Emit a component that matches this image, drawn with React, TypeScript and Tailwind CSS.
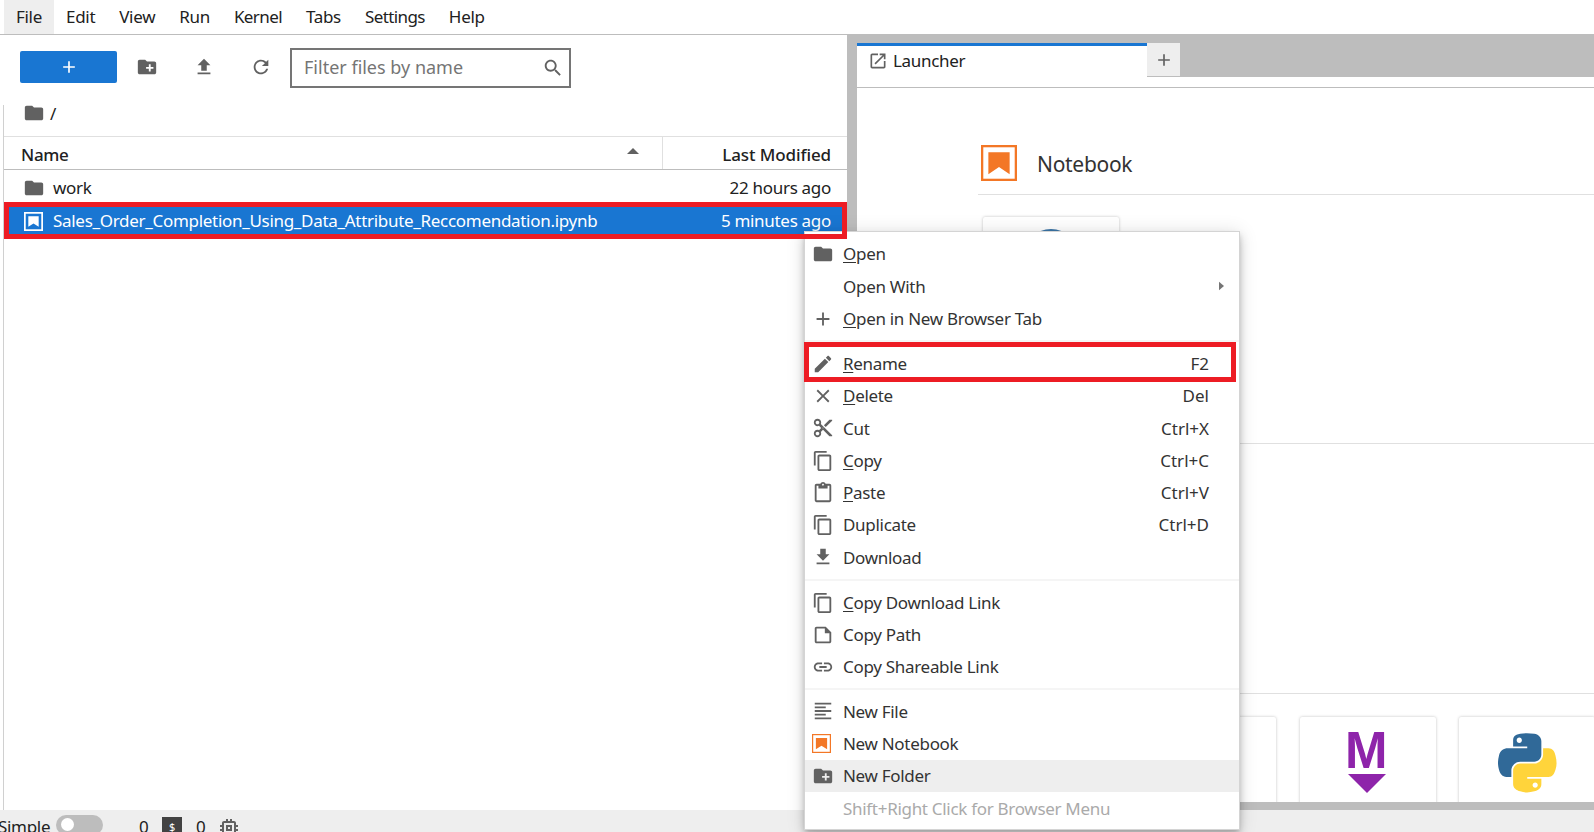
import React from 'react';

const ICONS: Record<string, string> = {
  folder: 'M10 4H4c-1.1 0-1.99.9-1.99 2L2 18c0 1.1.9 2 2 2h16c1.1 0 2-.9 2-2V8c0-1.1-.9-2-2-2h-8l-2-2z',
  newFolder: 'M20 6h-8l-2-2H4c-1.11 0-1.99.89-1.99 2L2 18c0 1.11.89 2 2 2h16c1.11 0 2-.89 2-2V8c0-1.11-.89-2-2-2zm-1 8h-3v3h-2v-3h-3v-2h3V9h2v3h3v2z',
  upload: 'M9 16h6v-6h4l-7-7-7 7h4zm-4 2h14v2H5z',
  refresh: 'M17.65 6.35C16.2 4.9 14.21 4 12 4c-4.42 0-7.99 3.58-7.99 8s3.57 8 7.99 8c3.73 0 6.84-2.55 7.73-6h-2.08c-.82 2.33-3.04 4-5.65 4-3.31 0-6-2.69-6-6s2.69-6 6-6c1.66 0 3.14.69 4.22 1.78L13 11h7V4l-2.35 2.35z',
  search: 'M15.5 14h-.79l-.28-.27C15.41 12.59 16 11.11 16 9.5 16 5.91 13.09 3 9.5 3S3 5.91 3 9.5 5.91 16 9.5 16c1.61 0 3.09-.59 4.23-1.57l.27.28v.79l5 4.99L20.49 19l-4.99-5zm-6 0C7.01 14 5 11.99 5 9.5S7.01 5 9.5 5 14 7.01 14 9.5 11.99 14 9.5 14z',
  launch: 'M19 19H5V5h7V3H5c-1.11 0-2 .9-2 2v14c0 1.1.89 2 2 2h14c1.1 0 2-.9 2-2v-7h-2v7zM14 3v2h3.59l-9.83 9.83 1.41 1.41L19 6.41V10h2V3h-7z',
  add: 'M19 13h-6v6h-2v-6H5v-2h6V5h2v6h6v2z',
  edit: 'M3 17.25V21h3.75L17.81 9.94l-3.75-3.75L3 17.25zM20.71 7.04c.39-.39.39-1.02 0-1.41l-2.34-2.34c-.39-.39-1.02-.39-1.41 0l-1.83 1.83 3.75 3.75 1.83-1.83z',
  close: 'M19 6.41L17.59 5 12 10.59 6.41 5 5 6.41 10.59 12 5 17.59 6.41 19 12 13.41 17.59 19 19 17.59 13.41 12z',
  cut: 'M9.64 7.64c.23-.5.36-1.05.36-1.64 0-2.21-1.79-4-4-4S2 3.79 2 6s1.79 4 4 4c.59 0 1.14-.13 1.64-.36L10 12l-2.36 2.36C7.14 14.13 6.59 14 6 14c-2.21 0-4 1.79-4 4s1.79 4 4 4 4-1.79 4-4c0-.59-.13-1.14-.36-1.64L12 14l7 7h3v-1L9.64 7.64zM6 8c-1.1 0-2-.89-2-2s.9-2 2-2 2 .89 2 2-.9 2-2 2zm0 12c-1.1 0-2-.89-2-2s.9-2 2-2 2 .89 2 2-.9 2-2 2zm6-7.5c-.28 0-.5-.22-.5-.5s.22-.5.5-.5.5.22.5.5-.22.5-.5.5zM19 3l-6 6 2 2 7-7V3z',
  copy: 'M16 1H4c-1.1 0-2 .9-2 2v14h2V3h12V1zm3 4H8c-1.1 0-2 .9-2 2v14c0 1.1.9 2 2 2h11c1.1 0 2-.9 2-2V7c0-1.1-.9-2-2-2zm0 16H8V7h11v14z',
  paste: 'M19 2h-4.18C14.4.84 13.3 0 12 0c-1.3 0-2.4.84-2.82 2H5c-1.1 0-2 .9-2 2v16c0 1.1.9 2 2 2h14c1.1 0 2-.9 2-2V4c0-1.1-.9-2-2-2zm-7 0c.55 0 1 .45 1 1s-.45 1-1 1-1-.45-1-1 .45-1 1-1zm7 18H5V4h2v3h10V4h2v16z',
  download: 'M19 9h-4V3H9v6H5l7 7 7-7zM5 18v2h14v-2H5z',
  path: 'M15 3H5c-1.1 0-2 .9-2 2v14c0 1.1.9 2 2 2h14c1.1 0 2-.9 2-2V9l-6-6zm4 16H5V5h9v5h5v9z',
  link: 'M3.9 12c0-1.71 1.39-3.1 3.1-3.1h4V7H7c-2.76 0-5 2.24-5 5s2.24 5 5 5h4v-1.9H7c-1.71 0-3.1-1.39-3.1-3.1zM8 13h8v-2H8v2zm9-6h-4v1.9h4c1.71 0 3.1 1.39 3.1 3.1s-1.39 3.1-3.1 3.1h-4V17h4c2.76 0 5-2.24 5-5s-2.24-5-5-5z',
  lines: 'M15 15H3v2h12v-2zm0-8H3v2h12V7zM3 13h18v-2H3v2zm0 8h18v-2H3v2zM3 3v2h18V3H3z',
  chip: 'M15 9H9v6h6V9zm-2 4h-2v-2h2v2zm8-2V9h-2V7c0-1.1-.9-2-2-2h-2V3h-2v2h-2V3H9v2H7c-1.1 0-2 .9-2 2v2H3v2h2v2H3v2h2v2c0 1.1.9 2 2 2h2v2h2v-2h2v2h2v-2h2c1.1 0 2-.9 2-2v-2h2v-2h-2v-2h2zm-4 6H7V7h10v10z',
};

const Icon = ({ name, className = 'w-[22px] h-[22px] text-[#616161]' }: { name: string; className?: string }) => (
  <svg viewBox="0 0 24 24" className={`shrink-0 fill-current ${className}`}>
    <path d={ICONS[name]} />
  </svg>
);

const NotebookIcon = ({ className }: { className: string }) => (
  <svg viewBox="0 0 22 22" className={`shrink-0 ${className}`}>
    <rect x="0.7" y="0.7" width="20.6" height="20.6" fill="#fff" stroke="#f37726" strokeWidth="1.4" />
    <path d="M4.5 4.500h13v13.300L11 13.500l-6.500 4.300z" fill="#f37726" />
  </svg>
);

const PythonLogo = () => (
  <svg viewBox="0 0 112 113" className="w-[59px] h-[60px]">
    <path fill="#306998" d="M54.9 0C50.3 0 46 .4 42.1 1.100 30.800 3.100 28.700 7.300 28.700 15v10.300h26.800v3.400H18.600C10.800 28.700 4 33.300 1.900 42.300c-2.500 10.200-2.600 16.500 0 27.200C3.800 77.400 8.300 83 16.100 83h9.300V70.700c0-8.800 7.600-16.600 16.700-16.600h26.800c7.500 0 13.400-6.100 13.400-13.600V15c0-7.300-6.100-12.700-13.400-13.900C64.300.3 59.500 0 54.900 0zM40.400 8.200c2.800 0 5 2.300 5 5.100 0 2.800-2.300 5.100-5 5.100-2.800 0-5-2.300-5-5.100 0-2.800 2.300-5.100 5-5.100z" />
    <path fill="#ffd43b" d="M85.600 28.700v11.900c0 9.200-7.800 17-16.700 17H42.100c-7.300 0-13.400 6.300-13.400 13.600v25.500c0 7.300 6.300 11.500 13.400 13.600 8.500 2.500 16.600 2.900 26.800 0 6.800-2 13.400-5.900 13.400-13.600V86.500H55.500v-3.400h40.200c7.800 0 10.700-5.400 13.400-13.600 2.800-8.400 2.700-16.500 0-27.200-1.900-7.800-5.600-13.600-13.400-13.600H85.600zM70.600 93.300c2.800 0 5 2.300 5 5.100 0 2.800-2.300 5.100-5 5.100-2.800 0-5-2.300-5-5.100 0-2.800 2.300-5.100 5-5.100z" />
  </svg>
);

type MenuRow = { icon?: string; u?: string; text: string; key?: string; arrow?: boolean; hover?: boolean; disabled?: boolean; red?: boolean };

const menuGroups: MenuRow[][] = [
  [
    { icon: 'folder', u: 'O', text: 'pen' },
    { text: 'Open With', arrow: true },
    { icon: 'add', u: 'O', text: 'pen in New Browser Tab' },
  ],
  [
    { icon: 'edit', u: 'R', text: 'ename', key: 'F2', red: true },
    { icon: 'close', u: 'D', text: 'elete', key: 'Del' },
    { icon: 'cut', text: 'Cut', key: 'Ctrl+X' },
    { icon: 'copy', u: 'C', text: 'opy', key: 'Ctrl+C' },
    { icon: 'paste', u: 'P', text: 'aste', key: 'Ctrl+V' },
    { icon: 'copy', text: 'Duplicate', key: 'Ctrl+D' },
    { icon: 'download', text: 'Download' },
  ],
  [
    { icon: 'copy', u: 'C', text: 'opy Download Link' },
    { icon: 'path', text: 'Copy Path' },
    { icon: 'link', text: 'Copy Shareable Link' },
  ],
  [
    { icon: 'lines', text: 'New File' },
    { icon: 'notebook', text: 'New Notebook' },
    { icon: 'newFolder', text: 'New Folder', hover: true },
    { text: 'Shift+Right Click for Browser Menu', disabled: true },
  ],
];

const ContextMenu = () => (
  <div className="absolute left-[804px] top-[231px] z-10 w-[436px] bg-white border border-[#d4d4d4] pt-[6px] pb-[4px] shadow-[0_3px_5px_-1px_rgba(0,0,0,0.2),0_6px_10px_0_rgba(0,0,0,0.14),0_1px_18px_0_rgba(0,0,0,0.12)]">
    {menuGroups.map((group, g) => (
      <div key={g}>
        {g > 0 && (
          <div className={`flex items-center ${g === 3 ? 'h-[12px]' : 'h-[13px]'}`}>
            <div className="w-full h-[2px] bg-[#f5f5f5]" />
          </div>
        )}
        {group.map((row) => (
          <div
            key={row.text}
            className={`relative h-[32.25px] flex items-center pl-[7px] pr-[30px] ${row.hover ? 'bg-[#eeeeee]' : ''} ${row.disabled ? 'text-[#aaaaaa] mt-px' : 'text-[#333333]'}`}
          >
            <div className="w-[31px] shrink-0">
              {row.icon === 'notebook' ? (
                <NotebookIcon className="w-[19px] h-[19px]" />
              ) : row.icon ? (
                <Icon name={row.icon} />
              ) : null}
            </div>
            <span className="flex-1 whitespace-nowrap">
              {row.u && <u className="underline-offset-2">{row.u}</u>}
              {row.text}
            </span>
            {row.key && <span className="whitespace-nowrap tracking-normal">{row.key}</span>}
            {row.arrow && (
              <svg viewBox="0 0 6 10" className="absolute right-[15px] w-[5px] h-[10px] fill-[#757575]"><path d="M0 0l6 5-6 5z" /></svg>
            )}
            {row.red && <div className="absolute -left-[1px] -top-[6px] w-[432px] h-[40px] border-[5px] border-[#ed1c24]" />}
          </div>
        ))}
      </div>
    ))}
  </div>
);

const menuItems = [
  { label: 'File', cls: 'bg-[#eeeeee]' },
  { label: 'Edit', cls: '' },
  { label: 'View', cls: '' },
  { label: 'Run', cls: '' },
  { label: 'Kernel', cls: 'tracking-[-0.6px]' },
  { label: 'Tabs', cls: '' },
  { label: 'Settings', cls: 'tracking-[-0.6px]' },
  { label: 'Help', cls: '' },
];

const Card = ({ children }: { children?: React.ReactNode }) => (
  <div className="w-[136px] h-[136px] shrink-0 bg-white rounded-[2px] shadow-[0_0_3px_rgba(0,0,0,0.25)] flex justify-center pt-[16px]">
    {children}
  </div>
);

const SectionTitle = ({ icon, label }: { icon: React.ReactNode; label: string }) => (
  <div className="h-[50px] flex items-start gap-[20px] border-b border-[#e0e0e0] pl-[3px]">
    {icon}
    <span className="text-[21px] leading-[38px] text-[#333333]">{label}</span>
  </div>
);

export default function App() {
  return (
    <div className="relative h-[832px] w-[1594px] overflow-hidden bg-white text-[17px] tracking-[-0.3px] text-[#212121] font-['Noto_Sans','Open_Sans',sans-serif]">
      {/* top menu bar */}
      <div className="h-[35px] flex border-b border-[#bdbdbd] pl-[4px]">
        {menuItems.map((item) => (
          <div key={item.label} className={`px-[12px] h-[34px] leading-[33px] ${item.cls}`}>{item.label}</div>
        ))}
      </div>

      <div className="flex h-[775px]">
        {/* file browser */}
        <div className="w-[847px] shrink-0 flex flex-col bg-white">
          <div className="h-[70px] shrink-0 flex items-start pt-[13px] pl-[20px]">
            <div className="w-[97px] h-[32px] mt-[3px] bg-[#1976d2] rounded-[2px] flex items-center justify-center">
              <Icon name="add" className="w-[20px] h-[20px] text-white" />
            </div>
            <div className="w-[173px] flex h-[38px] items-center gap-[35px] pl-[19px]">
              <Icon name="newFolder" className="w-[22px] h-[22px] text-[#616161]" />
              <Icon name="upload" className="w-[22px] h-[22px] text-[#616161]" />
              <Icon name="refresh" className="w-[22px] h-[22px] text-[#616161]" />
            </div>
            <div className="w-[281px] h-[40px] border-2 border-[#757575] flex items-center pl-[12px] pr-[5px] text-[18px] tracking-normal text-[#757575]">
              <span className="flex-1 -mt-[2px]">Filter files by name</span>
              <Icon name="search" className="w-[22px] h-[22px] text-[#616161]" />
            </div>
          </div>
          <div className="flex-1 flex flex-col ml-[3px] border-l border-[#d0d0d0]">
            <div className="h-[32px] flex items-start pl-[19px] gap-[5px] border-b border-[#e0e0e0] shrink-0">
              <Icon name="folder" className="w-[22px] h-[22px] text-[#616161] -mt-[3px]" />
              <span className="-mt-[4px]">/</span>
            </div>
            <div className="h-[33px] flex border-b border-[#bdbdbd] shrink-0">
              <div className="flex-1 flex items-center justify-between pl-[17px] pr-[23px] border-r border-[#e0e0e0] font-medium pt-[3px]">
                <span>Name</span>
                <svg viewBox="0 0 12 6" className="w-[12px] h-[6px] fill-[#616161] -mt-[7px]"><path d="M6 0l6 6H0z" /></svg>
              </div>
              <div className="w-[184px] flex items-center justify-end pr-[16px] font-medium tracking-[-0.1px] pt-[3px]">Last Modified</div>
            </div>
            <div className="h-[32px] flex items-center pl-[19px] pr-[16px] mt-[2px] shrink-0">
              <div className="w-[30px]"><Icon name="folder" /></div>
              <span className="flex-1">work</span>
              <span>22 hours ago</span>
            </div>
            <div className="relative h-[32px] shrink-0 text-white">
              <div className="h-[28px] mt-[3px] bg-[#1976d2] flex items-center pl-[20px] pr-[16px]">
                <div className="w-[29px]">
                  <svg viewBox="0 0 22 22" className="w-[19px] h-[19px]">
                    <rect x="1" y="1" width="20" height="20" fill="none" stroke="#fff" strokeWidth="2" />
                    <path d="M5 5h12v12l-6-3.800L5 17z" fill="#fff" />
                  </svg>
                </div>
                <span className="flex-1">Sales_Order_Completion_Using_Data_Attribute_Reccomendation.ipynb</span>
                <span>5 minutes ago</span>
              </div>
              <div className="absolute z-20 left-0 right-0 -top-[2px] h-[37px] border-[5px] border-[#ed1c24]" />
            </div>
          </div>
        </div>

        {/* launcher side */}
        <div className="flex-1 min-w-0 bg-[#bdbdbd] pl-[10px] pb-[8px] flex flex-col">
          <div className="h-[53px] shrink-0 pt-[8px] flex relative">
            <div className="absolute left-0 right-0 bottom-0 h-[11px] bg-white border-b border-[#bdbdbd]" />
            <div className="relative w-[290px] h-[44px] bg-white border-t-[3px] border-[#1976d2] flex items-center pl-[11px] pb-[11px] gap-[5px]">
              <Icon name="launch" className="w-[20px] h-[20px] text-[#616161]" />
              <span>Launcher</span>
            </div>
            <div className="relative w-[33px] h-[33px] bg-[#eeeeee] flex items-center justify-center">
              <Icon name="add" className="w-[20px] h-[20px] text-[#616161]" />
            </div>
          </div>
          <div className="flex-1 min-h-0 bg-white overflow-hidden pl-[121px] pt-[57px]">
            <SectionTitle icon={<NotebookIcon className="w-[36px] h-[36px]" />} label="Notebook" />
            <div className="flex gap-[23.400px] mt-[22px] h-[177px] pl-[5px]">
              <Card><div className="w-[54px] h-[54px] -mt-[4px] rounded-full bg-[#3d77a8]" /></Card>
            </div>
            <SectionTitle icon={<Icon name="chip" className="w-[36px] h-[36px] text-[#616161]" />} label="Console" />
            <div className="h-[200px]" />
            <SectionTitle icon={<Icon name="lines" className="w-[36px] h-[36px] text-[#616161]" />} label="Other" />
            <div className="flex gap-[23.400px] mt-[23px] pl-[3px]">
              <Card />
              <Card />
              <Card>
                <div className="flex flex-col items-center">
                  <span className="font-['Liberation_Sans',sans-serif] tracking-normal font-bold text-[51px] leading-[36px] text-[#8e24aa] -ml-[3px]">M</span>
                  <svg viewBox="0 0 38 19" className="w-[38px] h-[19px] mt-[5px] -ml-[2px] fill-[#8e24aa]"><path d="M0 0h38L19 19z" /></svg>
                </div>
              </Card>
              <Card><PythonLogo /></Card>
            </div>
          </div>
        </div>
      </div>

      {/* status bar, cut off by the window */}
      <div className="h-[22px] bg-[#eeeeee] flex items-start overflow-hidden pt-[5px]">
        <span className="-ml-[2px] w-[58px] leading-[24px]">Simple</span>
        <div className="w-[47px] h-[20px] rounded-full bg-[#bdbdbd] pl-[5px] pt-[3px]">
          <div className="w-[13px] h-[13px] rounded-full bg-white" />
        </div>
        <span className="ml-[36px] w-[23px] leading-[24px]">0</span>
        <div className="w-[20px] h-[20px] bg-[#424242] text-white text-[11px] text-center leading-[20px] mt-[2px]">$</div>
        <span className="ml-[14px] w-[21px] leading-[24px]">0</span>
        <Icon name="chip" className="w-[24px] h-[24px] text-[#616161] mt-[1px]" />
      </div>

      <ContextMenu />
    </div>
  );
}
